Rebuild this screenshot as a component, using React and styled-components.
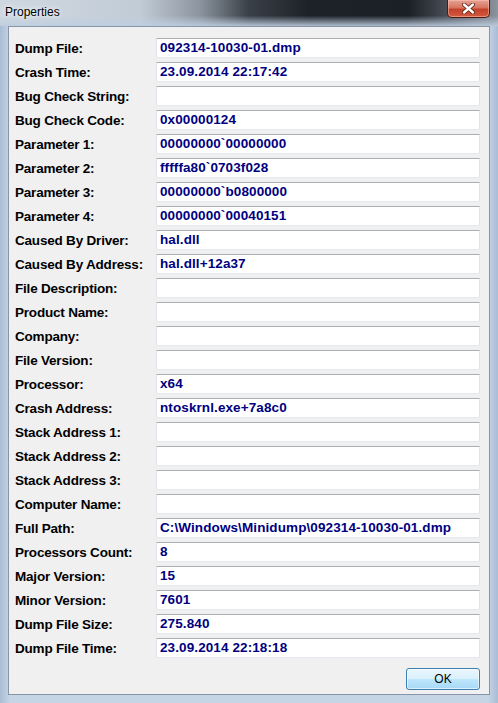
import React from "react";
import styled, { createGlobalStyle } from "styled-components";

const fields = [
  ["Dump File:", "092314-10030-01.dmp"],
  ["Crash Time:", "23.09.2014 22:17:42"],
  ["Bug Check String:", ""],
  ["Bug Check Code:", "0x00000124"],
  ["Parameter 1:", "00000000`00000000"],
  ["Parameter 2:", "fffffa80`0703f028"],
  ["Parameter 3:", "00000000`b0800000"],
  ["Parameter 4:", "00000000`00040151"],
  ["Caused By Driver:", "hal.dll"],
  ["Caused By Address:", "hal.dll+12a37"],
  ["File Description:", ""],
  ["Product Name:", ""],
  ["Company:", ""],
  ["File Version:", ""],
  ["Processor:", "x64"],
  ["Crash Address:", "ntoskrnl.exe+7a8c0"],
  ["Stack Address 1:", ""],
  ["Stack Address 2:", ""],
  ["Stack Address 3:", ""],
  ["Computer Name:", ""],
  ["Full Path:", "C:\\Windows\\Minidump\\092314-10030-01.dmp"],
  ["Processors Count:", "8"],
  ["Major Version:", "15"],
  ["Minor Version:", "7601"],
  ["Dump File Size:", "275.840"],
  ["Dump File Time:", "23.09.2014 22:18:18"],
];

const App = () => {
  return (
    <>
      <GlobalStyle />
      <Window>
        <TitleBar>
          <Title>Properties</Title>
          <CloseButton>
            <svg width="13" height="11" viewBox="0 0 13 11">
              <path
                d="M2 1.5 L11 9.5 M11 1.5 L2 9.5"
                stroke="#5a1e14"
                strokeWidth="4"
                strokeLinecap="round"
              />
              <path
                d="M2 1.5 L11 9.5 M11 1.5 L2 9.5"
                stroke="#ffffff"
                strokeWidth="2.4"
                strokeLinecap="round"
              />
            </svg>
          </CloseButton>
        </TitleBar>
        <Frame>
          <Client>
            <FieldGrid>
              {fields.map(([label, value]) => (
                <React.Fragment key={label}>
                  <Label>{label}</Label>
                  <ValueBox>{value}</ValueBox>
                </React.Fragment>
              ))}
            </FieldGrid>
            <Footer>
              <OkButton>OK</OkButton>
            </Footer>
          </Client>
        </Frame>
      </Window>
    </>
  );
};

export default App;

const GlobalStyle = createGlobalStyle`
  html, body {
    margin: 0;
    padding: 0;
    background: #f0f0f0;
  }
`;

const Window = styled.div`
  width: 498px;
  height: 703px;
  display: flex;
  flex-direction: column;
  font-family: "Liberation Sans", Arial, sans-serif;
  overflow: hidden;
`;

const TitleBar = styled.div`
  height: 26px;
  flex-shrink: 0;
  display: flex;
  justify-content: space-between;
  align-items: flex-start;
  padding: 0 8px 0 5px;
  box-sizing: border-box;
  background:
    linear-gradient(to bottom, rgba(255, 255, 255, 0) 60%, rgba(190, 206, 224, 0.9) 100%),
    linear-gradient(
      to right,
      #cfd8e1 0%,
      #c2ccd6 28%,
      #8d96a0 40%,
      #3a4048 50%,
      #1d2228 62%,
      #1b2026 82%,
      #4a5059 90%,
      #8b939c 100%
    );
`;

const Title = styled.div`
  font-size: 12px;
  color: #000;
  line-height: 24px;
  text-shadow: 0 0 6px #f4f7fa, 0 0 3px #f4f7fa;
`;

const CloseButton = styled.div`
  width: 43px;
  height: 18px;
  box-sizing: border-box;
  display: flex;
  align-items: center;
  justify-content: center;
  border: 1px solid #4d1a12;
  border-top: none;
  border-radius: 0 0 5px 5px;
  background: linear-gradient(to bottom, #e7a395 0%, #d6745f 45%, #c2412a 55%, #d45a3f 100%);
  box-shadow: inset 0 0 0 1px rgba(255, 200, 190, 0.5);
`;

const Frame = styled.div`
  flex: 1;
  display: flex;
  padding: 0 8px 8px 8px;
  background: linear-gradient(to right, #a8bcd3 0%, #c6d5e6 2%, #c6d5e6 98%, #a8bcd3 100%);
`;

const Client = styled.div`
  flex: 1;
  display: flex;
  flex-direction: column;
  background: #f0f0f0;
  border: 1px solid #8795a6;
  padding: 11px 9px 0 6px;
`;

const FieldGrid = styled.div`
  display: grid;
  grid-template-columns: 141px 1fr;
  grid-auto-rows: 20px;
  row-gap: 4px;
  align-items: center;
`;

const Label = styled.div`
  font-size: 13.5px;
  font-weight: bold;
  letter-spacing: -0.2px;
  color: #000;
  white-space: nowrap;
`;

const ValueBox = styled.div`
  height: 20px;
  box-sizing: border-box;
  background: #fff;
  border: 1px solid;
  border-color: #abadb3 #e2e3ea #e3e9ef #e2e3ea;
  padding: 0 3px;
  font-size: 13.5px;
  font-weight: bold;
  letter-spacing: 0.1px;
  line-height: 18px;
  color: #000080;
  white-space: nowrap;
  overflow: hidden;
`;

const Footer = styled.div`
  display: flex;
  justify-content: flex-end;
  margin-top: 10px;
`;

const OkButton = styled.button`
  width: 74px;
  height: 22px;
  border: 1px solid #3c7fb1;
  border-radius: 3px;
  background: linear-gradient(to bottom, #eaf6fd 0%, #d9f0fc 48%, #bee6fd 52%, #a7d9f5 100%);
  box-shadow: inset 0 0 0 1px rgba(255, 255, 255, 0.6);
  font-family: "Liberation Sans", Arial, sans-serif;
  font-size: 12px;
  color: #000;
  padding: 0;
  cursor: pointer;
`;
